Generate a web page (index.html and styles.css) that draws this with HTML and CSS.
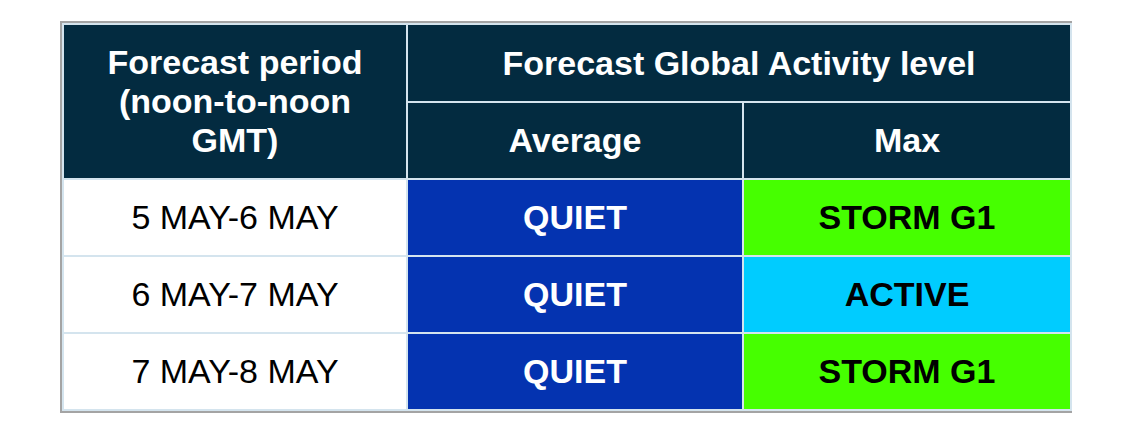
FILE: index.html
```html
<!DOCTYPE html>
<html lang="en">
<head>
<meta charset="utf-8">
<title>Forecast Global Activity level</title>
<link rel="stylesheet" href="styles.css">
</head>
<body>
<div class="frame">
  <table class="forecast">
    <colgroup>
      <col class="c1">
      <col class="c2">
      <col class="c3">
    </colgroup>
    <thead>
      <tr class="h1">
        <th rowspan="2" class="period-head">Forecast period<br>(noon-to-noon<br>GMT)</th>
        <th colspan="2">Forecast Global Activity level</th>
      </tr>
      <tr class="h2">
        <th>Average</th>
        <th>Max</th>
      </tr>
    </thead>
    <tbody>
      <tr>
        <td class="period">5 MAY-6 MAY</td>
        <td class="quiet">QUIET</td>
        <td class="storm">STORM G1</td>
      </tr>
      <tr>
        <td class="period">6 MAY-7 MAY</td>
        <td class="quiet">QUIET</td>
        <td class="active">ACTIVE</td>
      </tr>
      <tr>
        <td class="period">7 MAY-8 MAY</td>
        <td class="quiet">QUIET</td>
        <td class="storm">STORM G1</td>
      </tr>
    </tbody>
  </table>
</div>
</body>
</html>
```
FILE: styles.css
```css
html, body {
  margin: 0;
  padding: 0;
  background: #ffffff;
}

body {
  padding: 21px 0 0 60px;
  font-family: "Liberation Sans", Arial, sans-serif;
}

.frame {
  width: 1008px;
  border: 2px solid #a4a4a4;
  background: #ffffff;
}

.forecast {
  width: 1008px;
  border-collapse: collapse;
  table-layout: fixed;
}

.c1 { width: 344px; }
.c2 { width: 336px; }
.c3 { width: 328px; }

.forecast th,
.forecast td {
  border: 2px solid #d4e4ee;
  padding: 0;
  text-align: center;
  vertical-align: middle;
}

.forecast th {
  background: #032b40;
  color: #ffffff;
  font-weight: bold;
  font-size: 34px;
  line-height: 39px;
}

.h1 th { height: 76px; }
.h2 th { height: 75px; }

.forecast td {
  height: 75px;
  font-size: 34px;
}

.period {
  background: #ffffff;
  color: #000000;
}

.quiet {
  background: #0433b0;
  color: #ffffff;
  font-weight: bold;
}

.storm {
  background: #46ff00;
  color: #000000;
  font-weight: bold;
}

.active {
  background: #00ccff;
  color: #000000;
  font-weight: bold;
}
```
